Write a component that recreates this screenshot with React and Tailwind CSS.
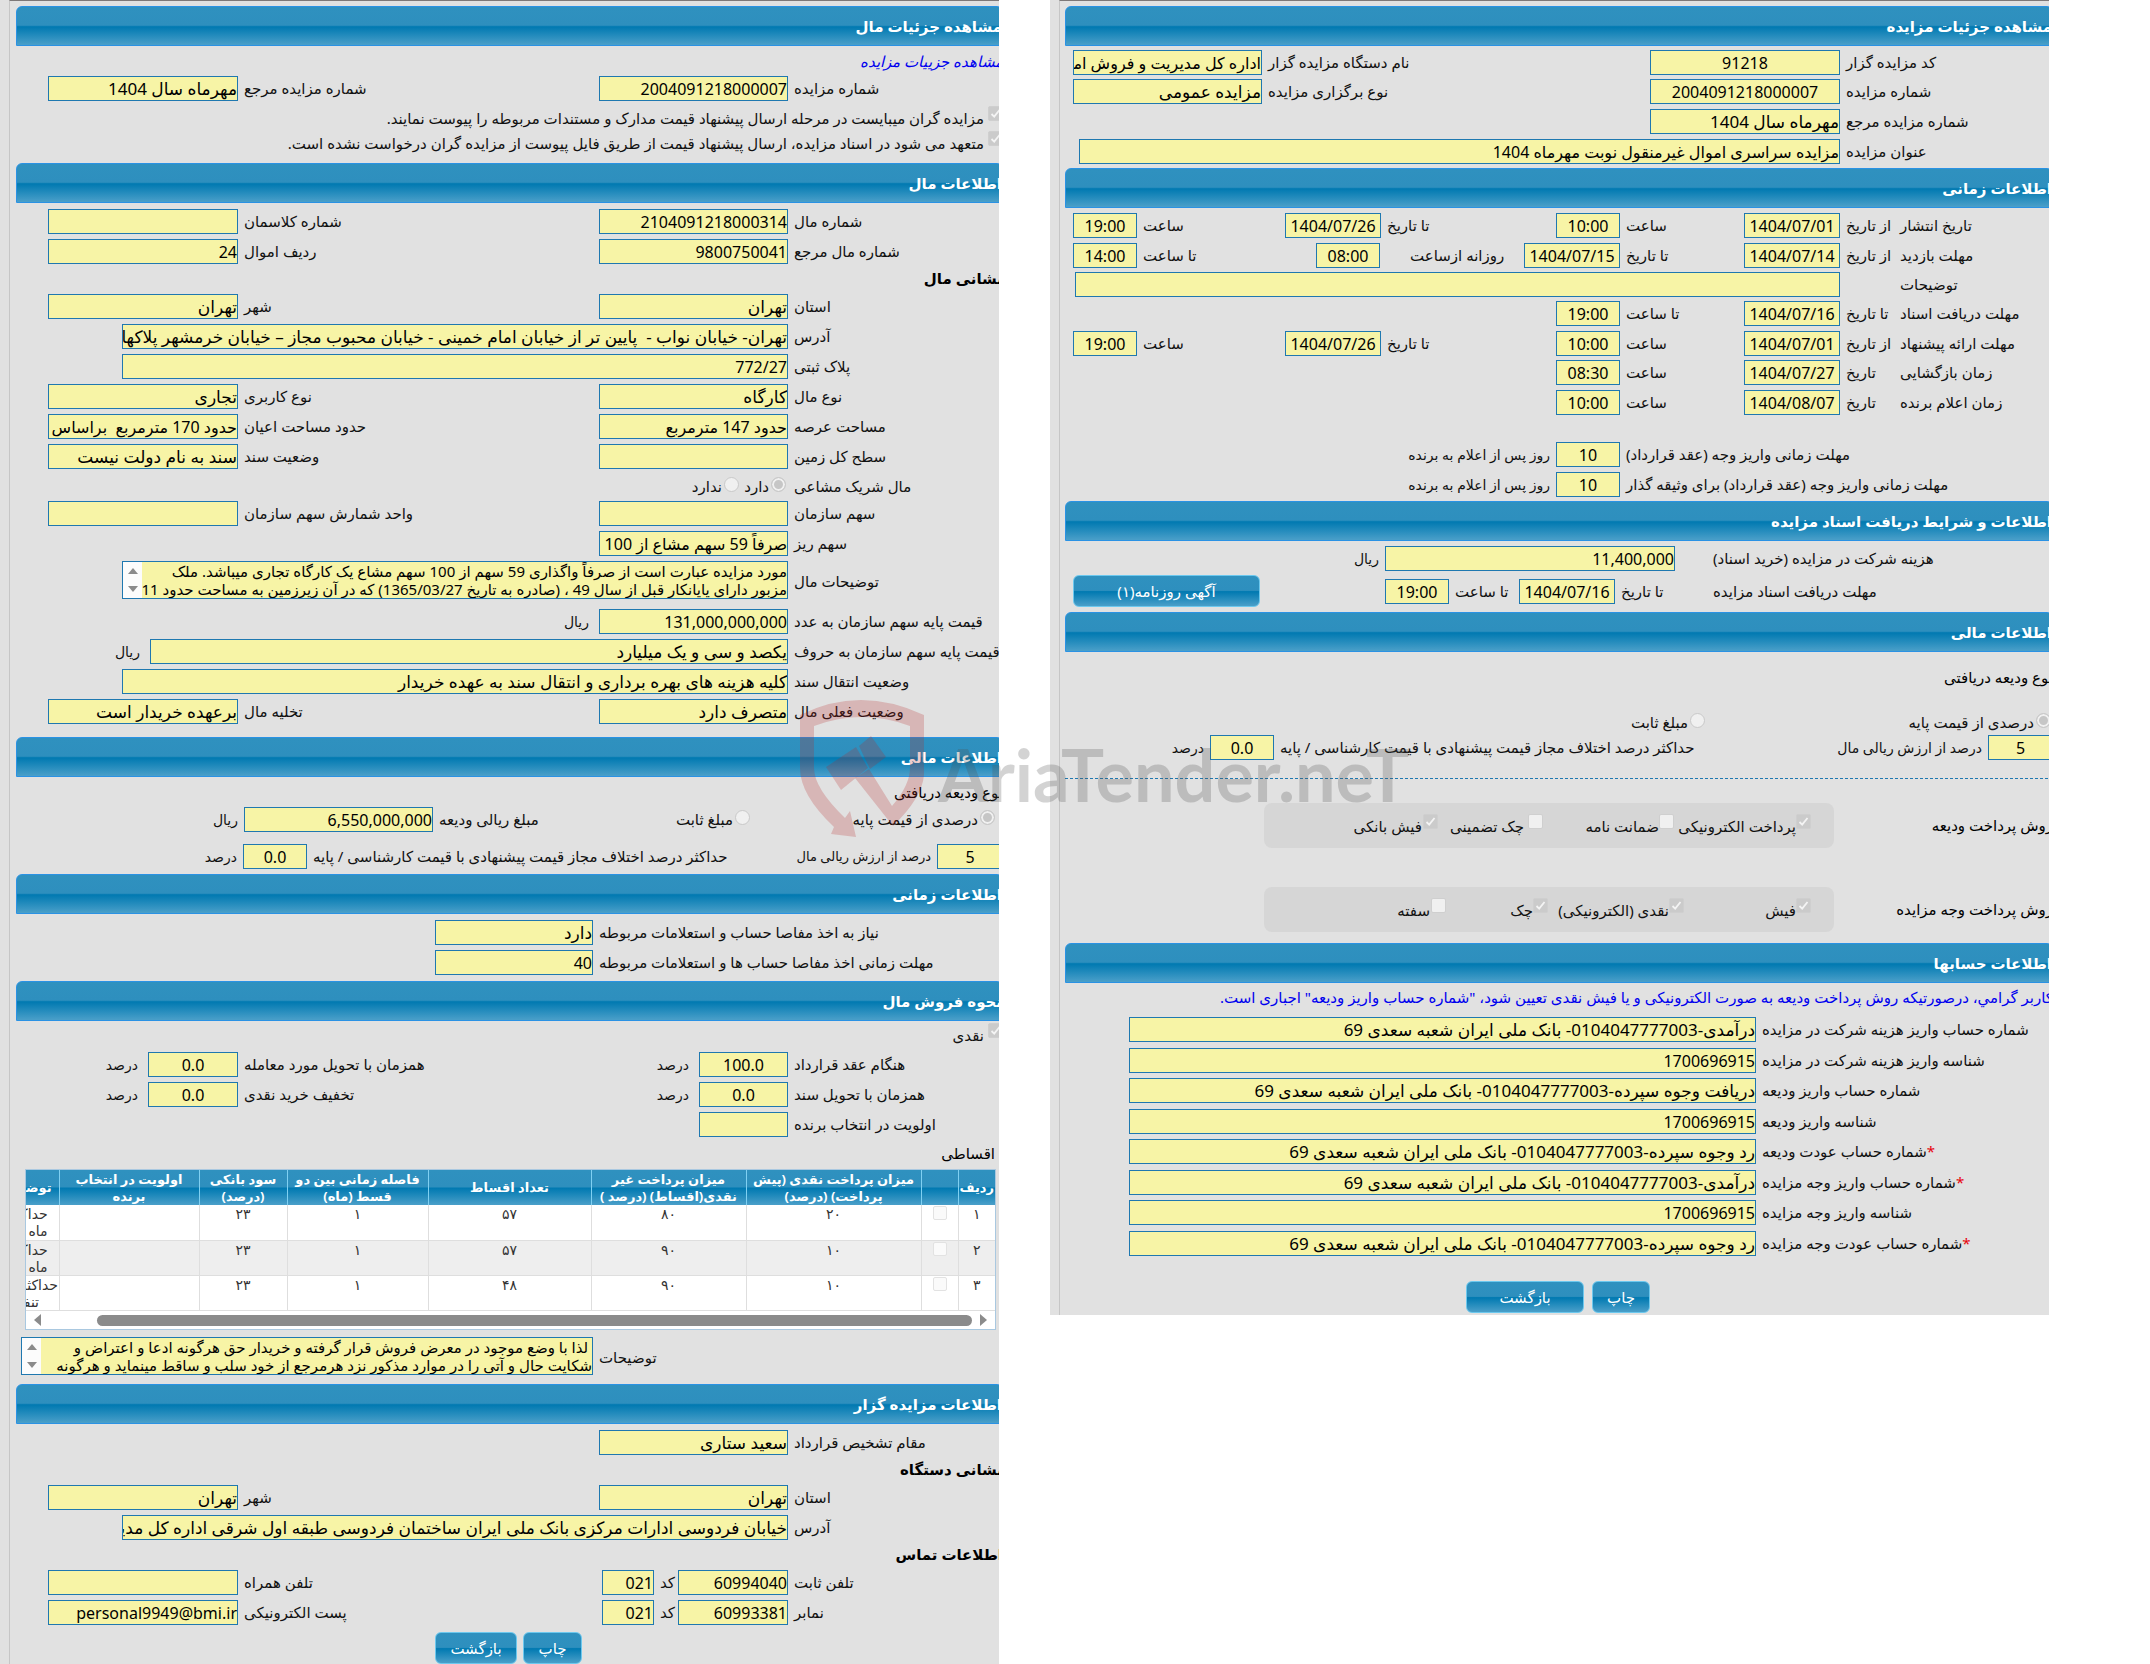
import { useId } from 'react';

const FIELD =
  'block h-[25px] shrink-0 border border-[#1f78b0] bg-[#f7f4a6] p-0 leading-[22px] text-black outline-none';
const LABEL = 'flex h-[25px] items-center justify-end whitespace-nowrap text-[15px] text-[#111]';
const UNIT = 'flex h-[25px] items-center whitespace-nowrap text-[14px] text-[#111]';
const GLOSS = 'bg-[linear-gradient(#2f91bf_0%,#2e8fbe_48%,#0079b1_52%,#4a9fc9_100%)]';

const ACCOUNTS = [
  { label: 'شماره حساب واریز هزینه شرکت در مزایده', value: 'درآمدی-0104047777003- بانک ملی ایران شعبه سعدی 69' },
  { label: 'شناسه واریز هزینه شرکت در مزایده', value: '1700696915' },
  { label: 'شماره حساب واریز ودیعه', value: 'دریافت وجوه سپرده-0104047777003- بانک ملی ایران شعبه سعدی 69' },
  { label: 'شناسه واریز ودیعه', value: '1700696915' },
  { label: 'شماره حساب عودت ودیعه', value: 'رد وجوه سپرده-0104047777003- بانک ملی ایران شعبه سعدی 69', required: true },
  { label: 'شماره حساب واریز وجه مزایده', value: 'درآمدی-0104047777003- بانک ملی ایران شعبه سعدی 69', required: true },
  { label: 'شناسه واریز وجه مزایده', value: '1700696915' },
  { label: 'شماره حساب عودت وجه مزایده', value: 'رد وجوه سپرده-0104047777003- بانک ملی ایران شعبه سعدی 69', required: true },
];

const INSTALLMENTS = [
  { n: '۱', cash: '۲۰', rest: '۸۰', count: '۵۷', gap: '۱', rate: '۲۳', note: ['حداکثر تا', 'ماه باشد'] },
  { n: '۲', cash: '۱۰', rest: '۹۰', count: '۵۷', gap: '۱', rate: '۲۳', note: ['حداکثر تا', 'ماه باشد'] },
  { n: '۳', cash: '۱۰', rest: '۹۰', count: '۴۸', gap: '۱', rate: '۲۳', note: ['حداکثر زمان', 'تنفس'] },
];

function Row({ className = 'h-[30px]', children }) {
  return <div className={`flex shrink-0 items-start gap-[6px] ${className}`}>{children}</div>;
}

function Field({ label, value = '', labelClass, inputClass, required, compact }) {
  const id = useId();
  const size = !compact && /[آ-ی]/.test(value) ? 'text-[17px]' : 'text-[16px]';
  return (
    <>
      <label htmlFor={id} className={`${LABEL} ${labelClass}`}>
        {required && <span className="text-red-600">*</span>}
        {label}
      </label>
      <input id={id} type="text" readOnly value={value} className={`${FIELD} ${size} ${inputClass}`} />
    </>
  );
}

function Area({ label, value, labelClass, boxClass }) {
  const id = useId();
  return (
    <>
      <label htmlFor={id} className={`${LABEL} mt-2 ${labelClass}`}>
        {label}
      </label>
      <div className={`flex h-[38px] shrink-0 overflow-hidden border border-[#1f78b0] bg-[#f7f4a6] ${boxClass}`}>
        <textarea
          id={id}
          readOnly
          value={value}
          className="block h-full min-w-0 flex-1 resize-none overflow-hidden whitespace-pre p-0 text-[15px] leading-[18px] text-black outline-none"
        />
        <div className="flex w-[19px] flex-col items-center justify-between bg-[#fcfcfc] py-[6px]">
          <svg width="10" height="6" viewBox="0 0 10 6"><path d="M5 0L10 6H0Z" fill="#8b8b8b" /></svg>
          <svg width="10" height="6" viewBox="0 0 10 6"><path d="M5 6L10 0H0Z" fill="#8b8b8b" /></svg>
        </div>
      </div>
    </>
  );
}

function Check({ label, checked = false, className = 'gap-px' }) {
  return (
    <label className={`flex h-[25px] shrink-0 items-start whitespace-nowrap leading-[25px] text-[#111] ${className}`}>
      <span className="grid size-[15px] shrink-0 place-items-center">
        <input
          type="checkbox"
          disabled
          defaultChecked={checked}
          className="col-start-1 row-start-1 size-[15px] appearance-none rounded-[2px] border border-[#cfcfcf] bg-[#f0f0f0] checked:bg-[#cbcbcb]"
        />
        {checked && (
          <svg className="col-start-1 row-start-1" width="11" height="11" viewBox="0 0 11 11">
            <path d="M1.5 6L4.2 8.6L9.5 2" fill="none" stroke="#f4f4f4" strokeWidth="1.8" />
          </svg>
        )}
      </span>
      {label}
    </label>
  );
}

function Radio({ name, label, checked = false, className = '' }) {
  return (
    <label className={`flex h-[25px] shrink-0 items-start gap-[2px] whitespace-nowrap leading-[25px] text-[#111] ${className}`}>
      <input
        type="radio"
        name={name}
        disabled
        defaultChecked={checked}
        className="mt-[3px] size-[15px] shrink-0 appearance-none rounded-full border border-[#c9c9c9] bg-[#f0f0f0] checked:bg-[#c6c6c6] checked:shadow-[inset_0_0_0_2px_#f0f0f0]"
      />
      {label}
    </label>
  );
}

function SectionTitle({ children }) {
  return (
    <h2
      className={`flex h-10 shrink-0 items-center rounded-t-md border border-[#2a92e4] font-bold text-white ${GLOSS}`}
    >
      {children}
    </h2>
  );
}

function SubTitle({ children }) {
  return <h3 className="flex h-[25px] items-center pb-[6px] font-bold text-black">{children}</h3>;
}

function Button({ className, children }) {
  return (
    <button
      type="button"
      className={`h-8 shrink-0 rounded-md border border-[#6cc8ee] text-white ${GLOSS} ${className}`}
    >
      {children}
    </button>
  );
}

function Panel({ bodyClass, children }) {
  return (
    <section className="min-w-0 flex-1 overflow-hidden bg-[#e1e1e1] pl-[9px]">
      <div className="border-l border-t border-l-[#c6c6c6] border-t-[#7d7878]">
        <div className={`-mr-1 ${bodyClass}`}>{children}</div>
      </div>
    </section>
  );
}

function Installments() {
  const th = 'border-l border-[#7fd0f2] p-0 text-center text-[13px] font-bold leading-[17px] whitespace-nowrap';
  const td = 'border-b border-l border-[#dedede] text-center align-top text-[14px] leading-[17px] text-[#333]';
  return (
    <div className="mr-[7px] ml-[9px] h-[161px] overflow-hidden border border-[#a9c8e0] bg-white">
      <table className="w-[1009px] table-fixed border-collapse">
        <colgroup>
          <col className="w-[37px]" />
          <col className="w-[37px]" />
          <col className="w-[175px]" />
          <col className="w-[155px]" />
          <col className="w-[163px]" />
          <col className="w-[141px]" />
          <col className="w-[88px]" />
          <col className="w-[140px]" />
          <col className="w-[73px]" />
        </colgroup>
        <thead>
          <tr className={`h-[35px] text-white ${GLOSS}`}>
            <th className={th}>ردیف</th>
            <th className={th} aria-label="انتخاب" />
            <th className={th}>میزان پرداخت نقدی (پیش<br />پرداخت) (درصد)</th>
            <th className={th}>میزان پرداخت غیر<br />نقدی(اقساط) (درصد )</th>
            <th className={th}>تعداد اقساط</th>
            <th className={th}>فاصله زمانی بین دو<br />قسط (ماه)</th>
            <th className={th}>سود بانکی<br />(درصد)</th>
            <th className={th}>اولویت در انتخاب<br />برنده</th>
            <th className={th}>توضیحات</th>
          </tr>
        </thead>
        <tbody>
          {INSTALLMENTS.map((row) => (
            <tr key={row.n} className="h-[35px] even:bg-[#eee]">
              <td className={td}>{row.n}</td>
              <td className={td}>
                <input
                  type="checkbox"
                  disabled
                  aria-label={row.n}
                  className="block mx-auto mt-px size-[14px] appearance-none rounded-[2px] border border-[#e2e2e2] bg-[#fafafa]"
                />
              </td>
              <td className={td}>{row.cash}</td>
              <td className={td}>{row.rest}</td>
              <td className={td}>{row.count}</td>
              <td className={td}>{row.gap}</td>
              <td className={td}>{row.rate}</td>
              <td className={td} />
              <td className={`${td} whitespace-nowrap`}>
                {row.note[0]}
                <br />
                {row.note[1]}
              </td>
            </tr>
          ))}
        </tbody>
      </table>
      <div className="flex h-[19px] items-center gap-2 px-2">
        <svg width="7" height="12" viewBox="0 0 7 12"><path d="M0 0L7 6L0 12Z" fill="#8b8b8b" /></svg>
        <div className="h-[11px] flex-1 rounded-full bg-[#8b8b8b]" />
        <svg className="mr-12" width="7" height="12" viewBox="0 0 7 12"><path d="M7 0L0 6L7 12Z" fill="#8b8b8b" /></svg>
      </div>
    </div>
  );
}

function PropertyPanel() {
  const a = 'w-[209px] shrink-0';
  const pair = 'h-[30px] pl-8';
  return (
    <Panel bodyClass="pl-[6px] pt-[5px] pb-1">
      <SectionTitle>مشاهده جزئیات مال</SectionTitle>
      <div className="flex h-[30px] items-center">
        <a href="#auction" className="italic text-[#0000ee]">مشاهده جزییات مزایده</a>
      </div>
      <Row className={pair}>
        <Field label="شماره مزایده" value="2004091218000007" labelClass={a} inputClass="w-[189px]" />
        <Field label="شماره مزایده مرجع" value="مهرماه سال 1404" labelClass="flex-1" inputClass="w-[190px]" />
      </Row>
      <Check
        checked
        className="gap-1"
        label="مزایده گران میبایست در مرحله ارسال پیشنهاد قیمت مدارک و مستندات مربوطه را پیوست نمایند."
      />
      <Check
        checked
        className="gap-1"
        label="متعهد می شود در اسناد مزایده، ارسال پیشنهاد قیمت از طریق فایل پیوست از مزایده گران درخواست نشده است."
      />

      <div className="h-[7px]" />
      <SectionTitle>اطلاعات مال</SectionTitle>
      <div className="pt-[6px] pb-2">
        <Row className={pair}>
          <Field label="شماره مال" value="2104091218000314" labelClass={a} inputClass="w-[189px]" />
          <Field label="شماره کلاسمان" labelClass="flex-1" inputClass="w-[190px]" />
        </Row>
        <Row className={pair}>
          <Field label="شماره مال مرجع" value="9800750041" labelClass={a} inputClass="w-[189px]" />
          <Field label="ردیف اموال" value="24" labelClass="flex-1" inputClass="w-[190px]" />
        </Row>
        <SubTitle>نشانی مال</SubTitle>
        <Row className={pair}>
          <Field label="استان" value="تهران" labelClass={a} inputClass="w-[189px]" />
          <Field label="شهر" value="تهران" labelClass="flex-1" inputClass="w-[190px]" />
        </Row>
        <Row>
          <Field
            label="آدرس"
            value="تهران- خیابان نواب -  پایین تر از خیابان امام خمینی - خیابان محبوب مجاز – خیابان خرمشهر پلاکهای"
            labelClass={a}
            inputClass="w-[666px]"
          />
        </Row>
        <Row>
          <Field label="پلاک ثبتی" value="772/27" labelClass={a} inputClass="w-[666px]" />
        </Row>
        <Row className={pair}>
          <Field label="نوع مال" value="کارگاه" labelClass={a} inputClass="w-[189px]" />
          <Field label="نوع کاربری" value="تجاری" labelClass="flex-1" inputClass="w-[190px]" />
        </Row>
        <Row className={pair}>
          <Field label="مساحت عرصه" value="حدود 147 مترمربع" compact labelClass={a} inputClass="w-[189px]" />
          <Field label="حدود مساحت اعیان" value="حدود 170 مترمربع  براساس" compact labelClass="flex-1" inputClass="w-[190px]" />
        </Row>
        <Row className={pair}>
          <Field label="سطح کل زمین" labelClass={a} inputClass="w-[189px]" />
          <Field label="وضعیت سند" value="سند به نام دولت نیست" labelClass="flex-1" inputClass="w-[190px]" />
        </Row>
        <div className="flex h-[27px] items-start gap-2">
          <span className={`${LABEL} ${a}`}>مال شریک مشاعی</span>
          <Radio name="shared" checked label="دارد" className="w-[39px]" />
          <Radio name="shared" label="ندارد" />
        </div>
        <Row className={pair}>
          <Field label="سهم سازمان" labelClass={a} inputClass="w-[189px]" />
          <Field label="واحد شمارش سهم سازمان" labelClass="flex-1" inputClass="w-[190px]" />
        </Row>
        <Row>
          <Field label="سهم ریز" value="صرفاً 59 سهم مشاع از 100" compact labelClass={a} inputClass="w-[189px]" />
        </Row>
        <Row className="h-12">
          <Area
            label="توضیحات مال"
            value={
              'مورد مزایده عبارت است از صرفاً واگذاری 59 سهم از 100 سهم مشاع یک کارگاه تجاری میباشد. ملک\n' +
              'مزبور دارای پایانکار قبل از سال 49 ، (صادره به تاریخ 1365/03/27) که در آن زیرزمین به مساحت حدود 11'
            }
            labelClass={a}
            boxClass="w-[666px]"
          />
        </Row>
        <Row>
          <Field label="قیمت پایه سهم سازمان به عدد" value="131,000,000,000" labelClass={a} inputClass="w-[189px]" />
          <span className={`${UNIT} pr-1`}>ریال</span>
        </Row>
        <Row>
          <Field label="قیمت پایه سهم سازمان به حروف" value="یکصد و سی و یک میلیارد" labelClass={a} inputClass="w-[638px]" />
          <span className={`${UNIT} pr-1`}>ریال</span>
        </Row>
        <Row>
          <Field
            label="وضعیت انتقال سند"
            value="کلیه هزینه های بهره برداری و انتقال سند به عهده خریدار"
            labelClass={a}
            inputClass="w-[666px]"
          />
        </Row>
        <Row className={pair}>
          <Field label="وضعیت فعلی مال" value="متصرف دارد" labelClass={a} inputClass="w-[189px]" />
          <Field label="تخلیه مال" value="برعهده خریدار است" labelClass="flex-1" inputClass="w-[190px]" />
        </Row>
      </div>

      <SectionTitle>اطلاعات مالی</SectionTitle>
      <div className="flex h-[30px] items-center">نوع ودیعه دریافتی</div>
      <Row className="h-[37px] pr-2">
        <Radio name="deposit" checked label="درصدی از قیمت پایه" className="w-[239px]" />
        <Radio name="deposit" label="مبلغ ثابت" className="w-[100px]" />
        <Field label="مبلغ ریالی ودیعه" value="6,550,000,000" labelClass="w-[205px]" inputClass="w-[189px]" />
        <span className={UNIT}>ریال</span>
      </Row>
      <Row>
        <input
          type="text"
          readOnly
          value="5"
          aria-label="درصد از ارزش ریالی مال"
          className={`${FIELD} w-[66px] text-center text-[16px]`}
        />
        <span className={`${UNIT} w-[150px]`}>
          <span className="text-[13px]">درصد از ارزش ریالی مال</span>
        </span>
        <Field
          label="حداکثر درصد اختلاف مجاز قیمت پیشنهادی با قیمت کارشناسی / پایه"
          value="0.0"
          labelClass="w-[462px]"
          inputClass="w-16 text-center"
        />
        <span className={UNIT}>درصد</span>
      </Row>

      <SectionTitle>اطلاعات زمانی</SectionTitle>
      <div className="pt-[6px] pb-px">
        <Row>
          <Field label="نیاز به اخذ مفاصا حساب و استعلامات مربوطه" value="دارد" labelClass="w-[404px]" inputClass="w-[158px]" />
        </Row>
        <Row>
          <Field label="مهلت زمانی اخذ مفاصا حساب ها و استعلامات مربوطه" value="40" labelClass="w-[404px]" inputClass="w-[158px]" />
        </Row>
      </div>

      <SectionTitle>نحوه فروش مال</SectionTitle>
      <div className="h-[31px] pt-[2px]">
        <Check checked label="نقدی" className="gap-1" />
      </div>
      <Row>
        <Field label="هنگام عقد قرارداد" value="100.0" labelClass={a} inputClass="w-[89px] text-center" />
        <span className={`${UNIT} pr-1`}>درصد</span>
        <Field label="همزمان با تحویل مورد معامله" value="0.0" labelClass="flex-1" inputClass="w-[90px] text-center" />
        <span className={`${UNIT} w-[126px] pr-1`}>درصد</span>
      </Row>
      <Row>
        <Field label="همزمان با تحویل سند" value="0.0" labelClass={a} inputClass="w-[89px] text-center" />
        <span className={`${UNIT} pr-1`}>درصد</span>
        <Field label="تخفیف خرید نقدی" value="0.0" labelClass="flex-1" inputClass="w-[90px] text-center" />
        <span className={`${UNIT} w-[126px] pr-1`}>درصد</span>
      </Row>
      <Row>
        <Field label="اولویت در انتخاب برنده" labelClass={a} inputClass="w-[89px]" />
      </Row>
      <div className="flex h-[27px] items-center pr-2 pb-1">اقساطی</div>
      <Installments />
      <Row className="h-[54px] pt-[7px]">
        <Area
          label="توضیحات"
          value={
            ' لذا با وضع موجود در معرض فروش قرار گرفته و خریدار حق هرگونه ادعا و اعتراض و\n' +
            'شکایت حال و آتی را در موارد مذکور نزد هرمرجع از خود سلب و ساقط مینماید و هرگونه'
          }
          labelClass="w-[404px]"
          boxClass="w-[572px]"
        />
      </Row>

      <SectionTitle>اطلاعات مزایده گزار</SectionTitle>
      <div className="pt-[6px]">
        <Row>
          <Field label="مقام تشخیص قرارداد" value="سعید ستاری" labelClass={a} inputClass="w-[189px]" />
        </Row>
        <SubTitle>نشانی دستگاه</SubTitle>
        <Row className={pair}>
          <Field label="استان" value="تهران" labelClass={a} inputClass="w-[189px]" />
          <Field label="شهر" value="تهران" labelClass="flex-1" inputClass="w-[190px]" />
        </Row>
        <Row>
          <Field
            label="آدرس"
            value="خیابان فردوسی ادارات مرکزی بانک ملی ایران ساختمان فردوسی طبقه اول شرقی اداره کل مدیریت"
            labelClass={a}
            inputClass="w-[666px]"
          />
        </Row>
        <SubTitle>اطلاعات تماس</SubTitle>
        <Row className={pair}>
          <Field label="تلفن ثابت" value="60994040" labelClass={a} inputClass="w-[110px]" />
          <Field label="کد" value="021" labelClass="w-3" inputClass="w-[52px]" />
          <Field label="تلفن همراه" labelClass="flex-1" inputClass="w-[190px]" />
        </Row>
        <Row className={pair}>
          <Field label="نمابر" value="60993381" labelClass={a} inputClass="w-[110px]" />
          <Field label="کد" value="021" labelClass="w-3" inputClass="w-[52px]" />
          <Field label="پست الکترونیکی" value="personal9949@bmi.ir" labelClass="flex-1" inputClass="w-[190px]" />
        </Row>
      </div>
      <div className="flex gap-[6px] pr-[421px] pt-[2px]">
        <Button className="w-[59px]">چاپ</Button>
        <Button className="w-[82px]">بازگشت</Button>
      </div>
    </Panel>
  );
}

function AuctionPanel() {
  const a = 'w-[207px] shrink-0';
  const main = `${LABEL} w-[153px] shrink-0`;
  const date = 'w-[96px] text-center';
  const time = 'w-16 text-center';
  return (
    <Panel bodyClass="pl-[5px] pt-[5px] pb-[2px]">
      <SectionTitle>مشاهده جزئیات مزایده</SectionTitle>
      <div className="pt-1 pb-[2px]">
        <Row className="h-[29px] pl-2">
          <Field label="کد مزایده گزار" value="91218" labelClass={a} inputClass="w-[190px] text-center" />
          <Field
            label="نام دستگاه مزایده گزار"
            value="اداره کل مدیریت و فروش اموال"
            compact
            labelClass="flex-1"
            inputClass="w-[189px]"
          />
        </Row>
        <Row className="h-[30px] pl-2">
          <Field label="شماره مزایده" value="2004091218000007" labelClass={a} inputClass="w-[190px] text-center" />
          <Field label="نوع برگزاری مزایده" value="مزایده عمومی" labelClass="flex-1" inputClass="w-[189px]" />
        </Row>
        <Row className="h-[30px]">
          <Field label="شماره مزایده مرجع" value="مهرماه سال 1404" labelClass={a} inputClass="w-[190px]" />
        </Row>
        <Row className="h-[27px]">
          <Field
            label="عنوان مزایده"
            value="مزایده سراسری اموال غیرمنقول نوبت مهرماه 1404"
            compact
            labelClass={a}
            inputClass="w-[761px]"
          />
        </Row>
      </div>

      <SectionTitle>اطلاعات زمانی</SectionTitle>
      <div className="pt-[5px]">
        <div className="flex h-[30px] pl-2">
          <span className={main}>تاریخ انتشار</span>
          <Row className="flex-1">
            <Field label="از تاریخ" value="1404/07/01" labelClass="w-[54px]" inputClass={date} />
            <Field label="ساعت" value="10:00" labelClass="w-[112px]" inputClass={time} />
            <Field label="تا تاریخ" value="1404/07/26" labelClass="w-[163px]" inputClass={date} />
            <Field label="ساعت" value="19:00" labelClass="flex-1" inputClass={time} />
          </Row>
        </div>
        <div className="flex h-[29px] pl-2">
          <span className={main}>مهلت بازدید</span>
          <Row className="flex-1">
            <Field label="از تاریخ" value="1404/07/14" labelClass="w-[54px]" inputClass={date} />
            <Field label="تا تاریخ" value="1404/07/15" labelClass="w-[112px]" inputClass={date} />
            <Field label="روزانه ازساعت" value="08:00" labelClass="ml-6 w-[108px]" inputClass={time} />
            <Field label="تا ساعت" value="14:00" labelClass="flex-1" inputClass={time} />
          </Row>
        </div>
        <Row className="h-[29px]">
          <Field label="توضیحات" labelClass="ml-[54px] w-[153px]" inputClass="w-[765px]" />
        </Row>
        <div className="flex h-[30px]">
          <span className={main}>مهلت دریافت اسناد</span>
          <Row className="flex-1">
            <Field label="تا تاریخ" value="1404/07/16" labelClass="w-[54px]" inputClass={date} />
            <Field label="تا ساعت" value="19:00" labelClass="w-[112px]" inputClass={time} />
          </Row>
        </div>
        <div className="flex h-[29px] pl-2">
          <span className={main}>مهلت ارائه پیشنهاد</span>
          <Row className="flex-1">
            <Field label="از تاریخ" value="1404/07/01" labelClass="w-[54px]" inputClass={date} />
            <Field label="ساعت" value="10:00" labelClass="w-[112px]" inputClass={time} />
            <Field label="تا تاریخ" value="1404/07/26" labelClass="w-[163px]" inputClass={date} />
            <Field label="ساعت" value="19:00" labelClass="flex-1" inputClass={time} />
          </Row>
        </div>
        <div className="flex h-[30px]">
          <span className={main}>زمان بازگشایی</span>
          <Row className="flex-1">
            <Field label="تاریخ" value="1404/07/27" labelClass="w-[54px]" inputClass={date} />
            <Field label="ساعت" value="08:30" labelClass="w-[112px]" inputClass={time} />
          </Row>
        </div>
        <div className="flex h-[52px]">
          <span className={main}>زمان اعلام برنده</span>
          <Row className="flex-1">
            <Field label="تاریخ" value="1404/08/07" labelClass="w-[54px]" inputClass={date} />
            <Field label="ساعت" value="10:00" labelClass="w-[112px]" inputClass={time} />
          </Row>
        </div>
        <Row>
          <Field label="مهلت زمانی واریز وجه (عقد قرارداد)" value="10" labelClass="w-[427px]" inputClass={time} />
          <span className={UNIT}>روز پس از اعلام به برنده</span>
        </Row>
        <Row className="h-[29px]">
          <Field label="مهلت زمانی واریز وجه (عقد قرارداد) برای وثیقه گذار" value="10" labelClass="w-[427px]" inputClass={time} />
          <span className={UNIT}>روز پس از اعلام به برنده</span>
        </Row>
      </div>

      <SectionTitle>اطلاعات و شرایط دریافت اسناد مزایده</SectionTitle>
      <div className="pt-[5px]">
        <Row className="h-[29px]">
          <Field label="هزینه شرکت در مزایده (خرید اسناد)" value="11,400,000" labelClass="ml-8 w-[340px]" inputClass="w-[290px]" />
          <span className={UNIT}>ریال</span>
        </Row>
        <div className="flex h-[37px] items-start pl-2">
          <span className={`${LABEL} mt-1 w-[340px] shrink-0`}>مهلت دریافت اسناد مزایده</span>
          <Row className="mt-1 flex-1">
            <Field label="تا تاریخ" value="1404/07/16" labelClass="w-[92px]" inputClass={date} />
            <Field label="تا ساعت" value="19:00" labelClass="w-[58px]" inputClass={time} />
          </Row>
          <Button className="w-[187px]">آگهی روزنامه(۱)</Button>
        </div>
      </div>

      <SectionTitle>اطلاعات مالی</SectionTitle>
      <div className="flex h-[58px] items-center pb-2">نوع ودیعه دریافتی</div>
      <div className="flex h-[25px] pr-[2px]">
        <Radio name="deposit-type" checked label="درصدی از قیمت پایه" className="w-[346px]" />
        <Radio name="deposit-type" label="مبلغ ثابت" />
      </div>
      <Row className="h-[43px]">
        <input
          type="text"
          readOnly
          value="5"
          aria-label="درصد از ارزش ریالی مال"
          className={`${FIELD} w-[65px] text-center text-[16px]`}
        />
        <span className={`${UNIT} w-[160px]`}>درصد از ارزش ریالی مال</span>
        <Field
          label="حداکثر درصد اختلاف مجاز قیمت پیشنهادی با قیمت کارشناسی / پایه"
          value="0.0"
          labelClass="w-[536px]"
          inputClass={time}
        />
        <span className={UNIT}>درصد</span>
      </Row>
      <div className="border-t border-dashed border-[#1f78b0] pt-6 pb-[11px]">
        <fieldset className="mb-[39px] flex items-center">
          <legend className="sr-only">روش پرداخت ودیعه</legend>
          <span className="w-[219px]">روش پرداخت ودیعه</span>
          <div className="flex h-[45px] w-[570px] items-start rounded-lg bg-[#d6d6d6] pr-[23px] pt-[11px]">
            <Check checked label="پرداخت الکترونیکی" className="w-[137px]" />
            <Check label="ضمانت نامه" className="w-[131px]" />
            <Check label="چک تضمینی" className="w-[105px] gap-1" />
            <Check checked label="فیش بانکی" />
          </div>
        </fieldset>
        <fieldset className="flex items-center">
          <legend className="sr-only">روش پرداخت وجه مزایده</legend>
          <span className="w-[219px]">روش پرداخت وجه مزایده</span>
          <div className="flex h-[45px] w-[570px] items-start rounded-lg bg-[#d6d6d6] pr-[23px] pt-[11px]">
            <Check checked label="فیش" className="w-[127px]" />
            <Check checked label="نقدی (الکترونیکی)" className="w-[136px]" />
            <Check checked label="چک" className="w-[102px]" />
            <Check label="سفته" />
          </div>
        </fieldset>
      </div>

      <SectionTitle>اطلاعات حسابها</SectionTitle>
      <p className="h-[34px] whitespace-nowrap leading-[28px] text-[#0000ee]">
        کاربر گرامي، درصورتیکه روش پرداخت ودیعه به صورت الکترونیکی و یا فیش نقدی تعیین شود، "شماره حساب واریز ودیعه" اجباری است.
      </p>
      {ACCOUNTS.map((account, i) => (
        <Row key={account.label} className={i % 2 ? 'h-[30px]' : 'h-[31px]'}>
          <Field {...account} labelClass="w-[291px]" inputClass="w-[627px]" />
        </Row>
      ))}
      <div className="flex gap-2 pr-[403px] pt-5">
        <Button className="w-[58px]">چاپ</Button>
        <Button className="w-[118px]">بازگشت</Button>
      </div>
    </Panel>
  );
}

function Watermark() {
  return (
    <div dir="ltr" className="pointer-events-none absolute left-[780px] top-[680px] h-40 w-[640px]" aria-hidden="true">
      <svg className="absolute left-0 top-0" width="160" height="160" viewBox="0 0 160 160" fill="#b42828" fillOpacity="0.23">
        <path d="M20 35Q80 5 144 35V95Q142 118 113 146L75 98L89 89L112 126Q130 105 130 88V46Q82 28 34 46V88Q34 108 65 138L70 131L76 157L51 154L54 147Q20 115 20 88Z" />
        <path d="M79 66L91 56L106 77L90 89Z" />
        <path d="M46 87L76 67L88 88L61 110Z" />
      </svg>
      <span className="absolute left-[158px] top-[44px] whitespace-nowrap font-['Lato',sans-serif] text-[72px] font-bold leading-[100px] text-[#505050]/25">
        AriaTender.neT
      </span>
    </div>
  );
}

export default function App() {
  return (
    <main
      dir="ltr"
      className="relative flex min-h-screen items-start gap-[51px] overflow-hidden bg-white pr-[101px] font-['Noto_Sans','DejaVu_Sans',sans-serif] text-[15px]"
    >
      <div dir="rtl" className="flex min-w-0 flex-1">
        <PropertyPanel />
      </div>
      <div dir="rtl" className="flex min-w-0 flex-1">
        <AuctionPanel />
      </div>
      <Watermark />
    </main>
  );
}
